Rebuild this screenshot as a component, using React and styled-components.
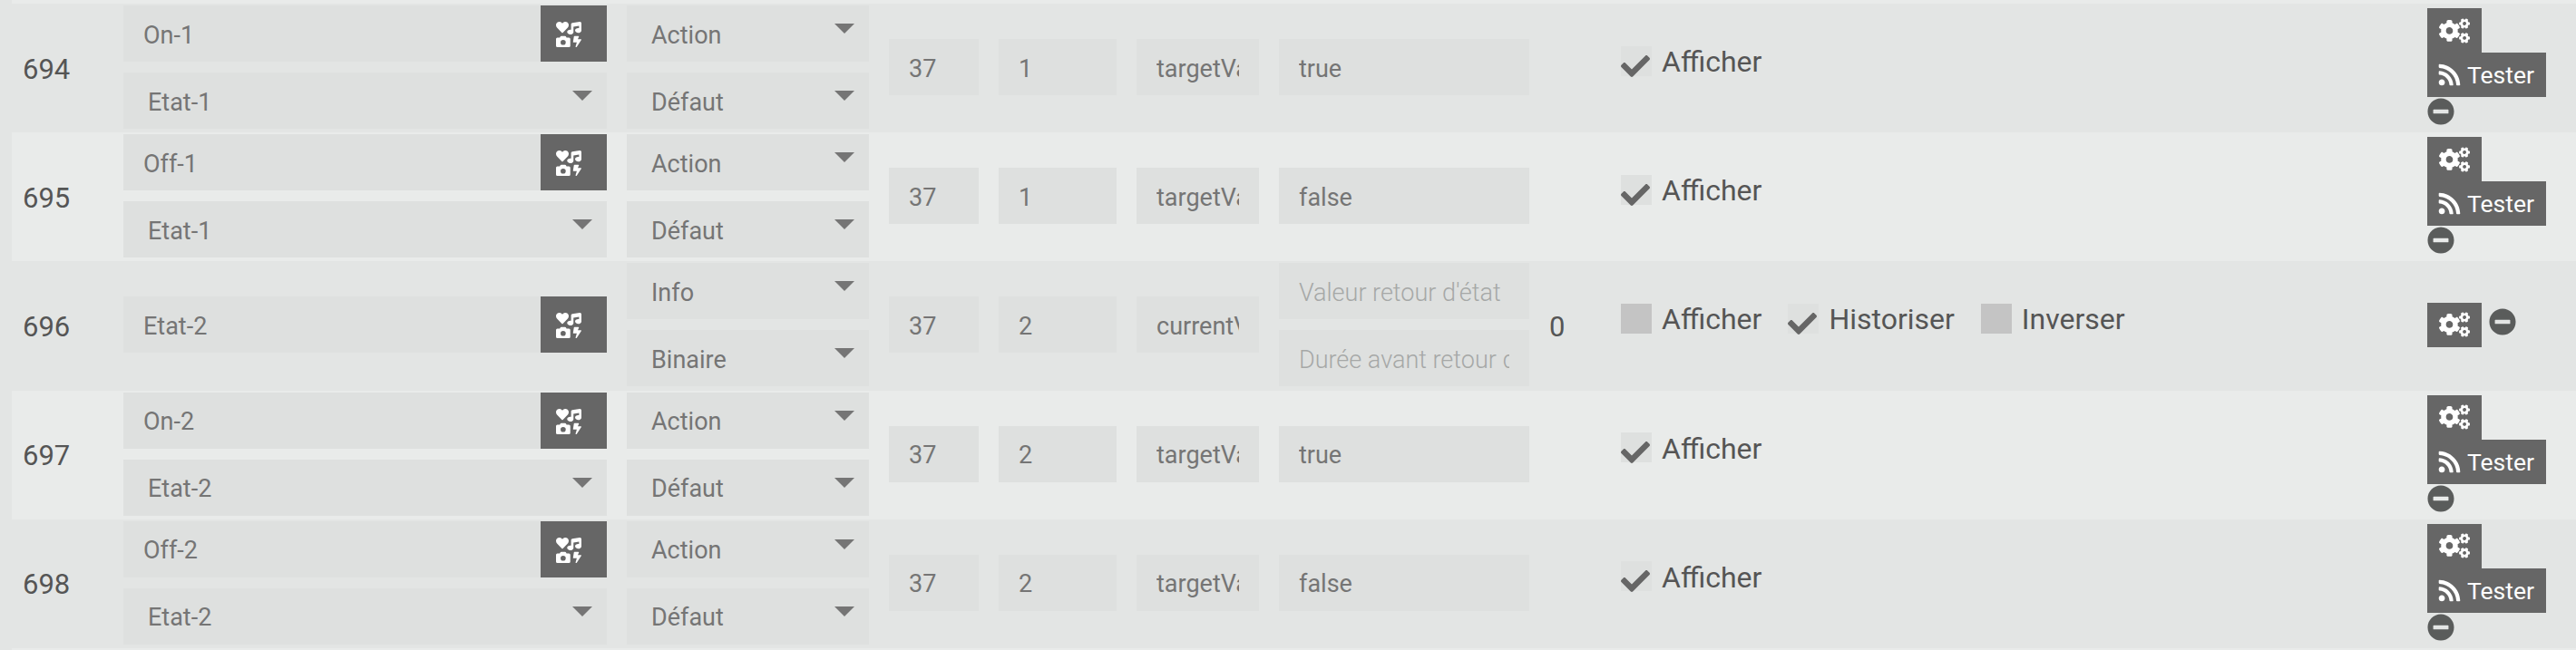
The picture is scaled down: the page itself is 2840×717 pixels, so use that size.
import React from 'react'
import styled, { createGlobalStyle } from 'styled-components'
import { FaIcons, FaCogs, FaRss, FaMinusCircle, FaCheck } from 'react-icons/fa'

const GlobalStyle = createGlobalStyle`
  html, body { margin: 0; padding: 0; background: #e3e5e4; overflow: hidden; }
  body { font-family: Roboto, "Liberation Sans", sans-serif; }
`

const commands = [
  { id: 694, name: 'On-1', state: 'Etat-1', type: 'Action', sub: 'Défaut', node: '37', inst: '1', prop: 'targetValue', value: 'true' },
  { id: 695, name: 'Off-1', state: 'Etat-1', type: 'Action', sub: 'Défaut', node: '37', inst: '1', prop: 'targetValue', value: 'false' },
  { id: 696, name: 'Etat-2', type: 'Info', sub: 'Binaire', node: '37', inst: '2', prop: 'currentValue', info: true },
  { id: 697, name: 'On-2', state: 'Etat-2', type: 'Action', sub: 'Défaut', node: '37', inst: '2', prop: 'targetValue', value: 'true' },
  { id: 698, name: 'Off-2', state: 'Etat-2', type: 'Action', sub: 'Défaut', node: '37', inst: '2', prop: 'targetValue', value: 'false' },
]

const Table = styled.div`
  padding-left: 13px;
  width: 2827px;
  height: 717px;
  overflow: hidden;
`

const Strip = styled.div`
  height: 4px;
  background: #e9ebea;
`

const Row = styled.div`
  display: grid;
  grid-template-columns: 89px 533px 267px 99px 130px 135px 276px 57px 867px 1fr;
  column-gap: 22px;
  align-items: center;
  box-sizing: border-box;
  height: 142.2px;
  padding: 0 0 2px 12px;
  background: ${p => (p.$light ? '#e9ebea' : 'transparent')};
`

const IdCell = styled.div`
  font-size: 31px;
  color: #555;
  padding-top: 4px;
`

const Stack = styled.div`
  display: flex;
  flex-direction: column;
  gap: 12px;
  align-self: start;
  margin-top: 2px;
`

const NameGroup = styled.div`
  display: flex;
  height: 62px;
`

const Field = styled.input`
  display: block;
  box-sizing: border-box;
  width: 100%;
  min-width: 0;
  height: 62px;
  padding: 3px 22px 0;
  border: 0;
  outline: 0;
  border-radius: 0;
  background: #dee0df;
  color: #757575;
  font-family: inherit;
  font-size: 27px;
  &::placeholder {
    color: #a6a8a7;
    font-weight: 300;
    opacity: 1;
  }
`

const IconButton = styled.div`
  flex: none;
  display: flex;
  align-items: center;
  box-sizing: border-box;
  width: 73px;
  padding: 2px 0 0 17px;
  background: #666;
  color: #fff;
`

const SelectBox = styled.div`
  position: relative;
  height: 62px;
  &::after {
    content: '';
    position: absolute;
    top: 20px;
    right: 16px;
    border-style: solid;
    border-width: 11px 11px 0;
    border-color: #757575 transparent transparent;
    pointer-events: none;
  }
`

const Select = styled.select`
  display: block;
  box-sizing: border-box;
  width: 100%;
  height: 62px;
  padding: 3px 27px 0;
  border: 0;
  outline: 0;
  border-radius: 0;
  appearance: none;
  background: #dee0df;
  color: #757575;
  font-family: inherit;
  font-size: 27px;
`

const ValueCell = styled.div`
  font-size: 31px;
  color: #555;
  padding-top: 4px;
`

const Options = styled.div`
  display: flex;
  align-items: center;
  margin-bottom: 14px;
`

const Option = styled.label`
  display: flex;
  align-items: center;
  gap: 11px;
  margin-right: 29px;
  font-size: 32px;
  color: #555;
`

const OptionText = styled.span`
  padding-top: 2px;
`

const Box = styled.span`
  position: relative;
  flex: none;
  width: 34px;
  height: 33px;
  background: ${p => (p.$checked ? '#dee0df' : '#c4c4c4')};
  color: #666;
  svg {
    position: absolute;
    left: 0;
    top: 6px;
  }
`

const Actions = styled.div`
  display: flex;
  flex-direction: ${p => (p.$inline ? 'row' : 'column')};
  align-items: ${p => (p.$inline ? 'center' : 'flex-start')};
  gap: ${p => (p.$inline ? '8px' : '0')};
  align-self: ${p => (p.$inline ? 'center' : 'start')};
  margin-top: ${p => (p.$inline ? '0' : '5px')};
`

const ActionButton = styled.div`
  display: flex;
  align-items: center;
  gap: 6px;
  box-sizing: border-box;
  min-width: 60px;
  height: 49px;
  padding: 0 13px;
  background: #666;
  color: #fff;
  font-size: 26.5px;
`

const RssIcon = styled(FaRss)`
  margin-left: -2px;
`

const Remove = styled.div`
  display: flex;
  color: #5a5c5b;
  margin-top: ${p => (p.$inline ? '-6px' : '1px')};
`

const Check = ({ label, checked }) => (
  <Option>
    <Box $checked={checked}>{checked && <FaCheck size={32} />}</Box>
    <OptionText>{label}</OptionText>
  </Option>
)

const Dropdown = ({ value }) => (
  <SelectBox>
    <Select value={value} onChange={() => {}}>
      <option>{value}</option>
    </Select>
  </SelectBox>
)

const CommandRow = ({ cmd, light }) => (
  <Row $light={light}>
    <IdCell>{cmd.id}</IdCell>
    {cmd.state ? (
      <Stack>
        <NameGroup>
          <Field readOnly value={cmd.name} />
          <IconButton><FaIcons size={28} /></IconButton>
        </NameGroup>
        <Dropdown value={cmd.state} />
      </Stack>
    ) : (
      <NameGroup>
        <Field readOnly value={cmd.name} />
        <IconButton><FaIcons size={28} /></IconButton>
      </NameGroup>
    )}
    <Stack>
      <Dropdown value={cmd.type} />
      <Dropdown value={cmd.sub} />
    </Stack>
    <Field readOnly value={cmd.node} />
    <Field readOnly value={cmd.inst} />
    <Field readOnly value={cmd.prop} />
    {cmd.info ? (
      <Stack>
        <Field readOnly placeholder="Valeur retour d'état" />
        <Field readOnly placeholder="Durée avant retour d'état" />
      </Stack>
    ) : (
      <Field readOnly value={cmd.value} />
    )}
    <ValueCell>{cmd.info ? '0' : ''}</ValueCell>
    <Options>
      {cmd.info ? (
        <>
          <Check label="Afficher" />
          <Check label="Historiser" checked />
          <Check label="Inverser" />
        </>
      ) : (
        <Check label="Afficher" checked />
      )}
    </Options>
    {cmd.info ? (
      <Actions $inline>
        <ActionButton><FaCogs size={34} /></ActionButton>
        <Remove $inline><FaMinusCircle size={30} /></Remove>
      </Actions>
    ) : (
      <Actions>
        <ActionButton><FaCogs size={34} /></ActionButton>
        <ActionButton><RssIcon size={27} />Tester</ActionButton>
        <Remove><FaMinusCircle size={30} /></Remove>
      </Actions>
    )}
  </Row>
)

export default function App() {
  return (
    <>
      <GlobalStyle />
      <Table>
        <Strip />
        {commands.map((cmd, i) => (
          <CommandRow key={cmd.id} cmd={cmd} light={i % 2 === 1} />
        ))}
        <Strip />
      </Table>
    </>
  )
}
